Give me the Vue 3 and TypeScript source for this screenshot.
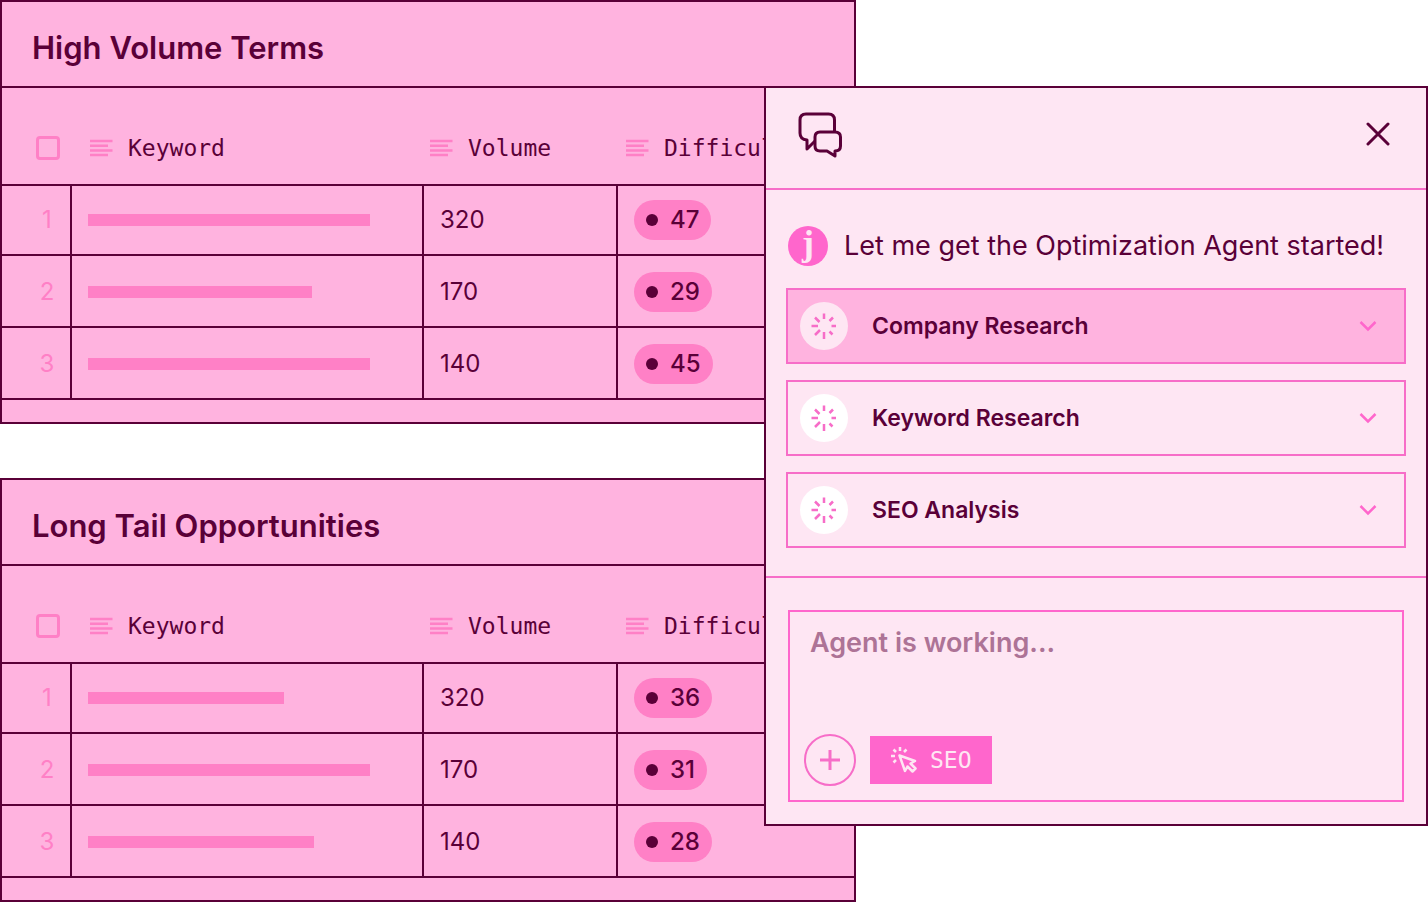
<script setup lang="ts">
import { ref } from 'vue'

interface Row {
  volume: number
  difficulty: number
  bar: number
}

interface Sheet {
  id: string
  title: string
  rows: Row[]
}

const sheets: Sheet[] = [
  {
    id: 'high-volume',
    title: 'High Volume Terms',
    rows: [
      { volume: 320, difficulty: 47, bar: 282 },
      { volume: 170, difficulty: 29, bar: 224 },
      { volume: 140, difficulty: 45, bar: 282 },
    ],
  },
  {
    id: 'long-tail',
    title: 'Long Tail Opportunities',
    rows: [
      { volume: 320, difficulty: 36, bar: 196 },
      { volume: 170, difficulty: 31, bar: 282 },
      { volume: 140, difficulty: 28, bar: 226 },
    ],
  },
]

const columns = ['Keyword', 'Volume', 'Difficulty']
const tasks = ['Company Research', 'Keyword Research', 'SEO Analysis']
const activeTask = ref(0)
const draft = ref('')
</script>

<template>
  <main class="board">
    <div class="sheets">
      <section v-for="sheet in sheets" :key="sheet.id" class="sheet">
        <h2 class="sheet-title">{{ sheet.title }}</h2>
        <table class="grid">
          <colgroup>
            <col class="col-index" />
            <col class="col-keyword" />
            <col class="col-volume" />
            <col />
          </colgroup>
          <thead>
            <tr>
              <th class="select-cell">
                <input type="checkbox" class="tick" :aria-label="'Select all in ' + sheet.title" />
              </th>
              <th v-for="column in columns" :key="column" scope="col" :class="'head-' + column.toLowerCase()">
                <span class="head">
                  <svg class="lines" viewBox="0 0 24 18" aria-hidden="true">
                    <path d="M0 2h22.500M0 6.700h18M0 11.400h22.500M0 16h18" />
                  </svg>
                  {{ column }}
                </span>
              </th>
            </tr>
          </thead>
          <tbody>
            <tr v-for="(row, i) in sheet.rows" :key="i">
              <td class="index">{{ i + 1 }}</td>
              <td><div class="bar" :style="{ width: row.bar + 'px' }"></div></td>
              <td class="volume">{{ row.volume }}</td>
              <td>
                <span class="pill"><span class="dot"></span>{{ row.difficulty }}</span>
              </td>
            </tr>
          </tbody>
        </table>
      </section>
    </div>

    <aside class="panel">
      <header class="panel-head">
        <svg class="chat" viewBox="0 0 44 46" aria-hidden="true">
          <path d="M36.500 20V8Q36.500 2 30.500 2H8Q2 2 2 8V21Q2 27.500 9 28V37L17 29" />
          <path d="M22 20H37Q42.500 20 42.500 25V34Q42.500 39 37 39V44L29 39H22Q17 39 17 34V25Q17 20 22 20Z" />
        </svg>
        <button type="button" class="close" aria-label="Close">
          <svg viewBox="0 0 24 24" aria-hidden="true"><path d="M2 2l20 20M22 2L2 22" /></svg>
        </button>
      </header>

      <div class="conversation">
        <div class="message">
          <span class="avatar">j</span>
          <p class="message-text">Let me get the Optimization Agent started!</p>
        </div>
        <button
          v-for="(task, i) in tasks"
          :key="task"
          type="button"
          class="task"
          :class="{ active: i === activeTask }"
          @click="activeTask = i"
        >
          <span class="badge">
            <svg viewBox="0 0 26 26" aria-hidden="true">
              <path d="M13 0.500V6M13 19V26M0.500 13H7M20.500 13H25M4 4.500L8.500 9M22 4.500L18.500 8M4 22L9 17M18.500 18.500L21.500 21.500" />
            </svg>
          </span>
          <span class="task-name">{{ task }}</span>
          <svg class="chevron" viewBox="0 0 18 12" aria-hidden="true"><path d="M1.500 2L9 9.500L16.500 2" /></svg>
        </button>
      </div>

      <footer class="panel-foot">
        <div class="composer">
          <textarea v-model="draft" class="draft" rows="2" placeholder="Agent is working..." aria-label="Message"></textarea>
          <div class="tools">
            <button type="button" class="add" aria-label="Add">
              <svg viewBox="0 0 20 20" aria-hidden="true"><path d="M10 0v20M0 10h20" /></svg>
            </button>
            <button type="button" class="chip">
              <svg viewBox="0 0 28 28" aria-hidden="true">
                <path d="M9.500 9.500L25 15L20.500 17.500L25.500 22.500L22.500 25.500L17.500 20.500L15 25Z" stroke-linejoin="round" />
                <path d="M10 1V5M1 10H5M3.500 3.500L6 6M16.500 3.500L14 6M3.500 16.500L6 14" />
              </svg>
              SEO
            </button>
          </div>
        </div>
      </footer>
    </aside>
  </main>
</template>

<style>
body {
  margin: 0;
  background: #ffffff;
}
</style>

<style scoped>
.board {
  --ink: #5a0038;
  --hot: #ff66cc;
  --line: #f76dc8;
  --mid: #ff80c6;
  --soft: #ffb3df;
  --pale: #fee6f3;
  display: grid;
  grid-template-columns: 764fr 92fr 572fr;
  align-items: start;
  color: var(--ink);
  font-family: Inter, "Liberation Sans", sans-serif;
}

.board *,
.board *::before {
  box-sizing: border-box;
}

.sheets {
  grid-column: 1 / 3;
  grid-row: 1;
  display: grid;
  gap: 54px;
  min-width: 0;
}

.sheet {
  overflow: hidden;
  padding-bottom: 22px;
  background: var(--soft);
  border: 2px solid var(--ink);
}

.sheet-title {
  margin: 0;
  padding: 26px 30px 18px;
  border-bottom: 2px solid var(--ink);
  font-size: 31px;
  font-weight: 600;
  line-height: 40px;
}

.grid {
  width: 100%;
  table-layout: fixed;
  border-collapse: separate;
  border-spacing: 0;
  font-size: 24px;
  line-height: 32px;
}

.col-index {
  width: 70px;
}

.col-keyword {
  width: 352px;
}

.col-volume {
  width: 194px;
}

th {
  height: 98px;
  padding: 24px 0 0;
  border-bottom: 2px solid var(--ink);
  font-family: "DejaVu Sans Mono", monospace;
  font-size: 23px;
  font-weight: 400;
  text-align: left;
}

.select-cell {
  padding-left: 34px;
}

.head-keyword {
  padding-left: 18px;
}

.head-volume {
  padding-left: 6px;
}

.head-difficulty {
  padding-left: 8px;
}

.head {
  display: flex;
  align-items: center;
  gap: 14px;
}

.lines {
  width: 24px;
  height: 18px;
  fill: none;
  stroke: var(--mid);
  stroke-width: 2.5;
}

.tick {
  display: block;
  appearance: none;
  width: 24px;
  height: 24px;
  margin: 0;
  border: 3px solid var(--mid);
  border-radius: 4px;
}

.tick:checked {
  background: var(--mid);
}

td {
  height: 72px;
  padding: 2px 16px 0;
  border-right: 2px solid var(--ink);
  border-bottom: 2px solid var(--ink);
}

td:last-child {
  border-right: 0;
}

.index {
  padding-right: 0;
  padding-left: 22px;
  color: var(--mid);
  text-align: center;
}

tbody tr:first-child td {
  height: 70px;
  padding-top: 0;
}

.bar {
  max-width: 100%;
  height: 12px;
  background: var(--mid);
}

.pill {
  display: flex;
  align-items: center;
  gap: 12px;
  width: fit-content;
  height: 40px;
  padding: 0 12px;
  border-radius: 20px;
  background: var(--mid);
  font-weight: 500;
}

.dot {
  width: 12px;
  height: 12px;
  border-radius: 50%;
  background: var(--ink);
}

.panel {
  grid-column: 2 / 4;
  grid-row: 1;
  z-index: 1;
  min-width: 0;
  margin-top: 86px;
  background: var(--pale);
  border: 2px solid var(--ink);
}

button {
  margin: 0;
  padding: 0;
  border: 0;
  background: none;
  color: inherit;
  font: inherit;
  cursor: pointer;
}

svg {
  display: block;
  flex: none;
}

.panel-head {
  display: flex;
  align-items: center;
  justify-content: space-between;
  height: 102px;
  padding: 0 36px 6px 32px;
  border-bottom: 2px solid var(--line);
}

.chat {
  width: 44px;
  height: 46px;
  fill: none;
  stroke: var(--ink);
  stroke-width: 3;
  stroke-linejoin: round;
}

.close svg {
  width: 24px;
  height: 24px;
  fill: none;
  stroke: var(--ink);
  stroke-width: 3;
  stroke-linecap: round;
}

.close {
  margin-bottom: 2px;
}

.conversation {
  display: grid;
  gap: 16px;
  padding: 36px 20px 28px;
  border-bottom: 2px solid var(--line);
}

.message {
  display: flex;
  align-items: center;
  gap: 16px;
  padding: 0 2px 6px;
}

.avatar {
  display: flex;
  flex: none;
  justify-content: center;
  width: 40px;
  height: 40px;
  border-radius: 50%;
  background: var(--hot);
  color: var(--pale);
  font-family: "Liberation Serif", serif;
  font-size: 36px;
  font-weight: 700;
  line-height: 34px;
}

.message-text {
  margin: 0;
  font-size: 27px;
  line-height: 36px;
}

.task {
  display: flex;
  align-items: center;
  gap: 24px;
  width: 100%;
  padding: 12px 27px 12px 12px;
  border: 2px solid var(--line);
  text-align: left;
}

.task.active {
  background: var(--soft);
}

.badge {
  display: flex;
  align-items: center;
  justify-content: center;
  width: 48px;
  height: 48px;
  border-radius: 50%;
  background: #ffffff;
}

.active .badge {
  background: var(--pale);
}

.badge svg {
  width: 26px;
  height: 26px;
  fill: none;
  stroke: var(--line);
  stroke-width: 2.5;
}

.task-name {
  flex: 1;
  font-size: 23px;
  font-weight: 600;
  line-height: 32px;
}

.chevron {
  width: 18px;
  height: 12px;
  fill: none;
  stroke: var(--hot);
  stroke-width: 2.5;
}

.panel-foot {
  padding: 32px 22px 22px;
}

.composer {
  padding: 14px;
  border: 2px solid var(--hot);
}

.draft {
  display: block;
  width: 100%;
  height: 94px;
  margin: 0 0 14px;
  padding: 0 6px;
  border: 0;
  outline: 0;
  resize: none;
  background: transparent;
  color: var(--ink);
  font-family: inherit;
  font-size: 27px;
  font-weight: 600;
  line-height: 34px;
}

.draft::placeholder {
  color: #ad7396;
  opacity: 1;
}

.tools {
  display: flex;
  align-items: center;
  gap: 14px;
}

.add {
  display: flex;
  align-items: center;
  justify-content: center;
  width: 52px;
  height: 52px;
  border: 2px solid var(--line);
  border-radius: 50%;
}

.add svg {
  width: 20px;
  height: 20px;
  fill: none;
  stroke: var(--line);
  stroke-width: 3;
}

.chip {
  display: flex;
  align-items: center;
  gap: 12px;
  height: 48px;
  padding: 0 20px;
  background: var(--hot);
  color: var(--pale);
  font-family: "DejaVu Sans Mono", monospace;
  font-size: 23px;
}

.chip svg {
  width: 28px;
  height: 28px;
  fill: none;
  stroke: var(--pale);
  stroke-width: 2.5;
}
</style>
